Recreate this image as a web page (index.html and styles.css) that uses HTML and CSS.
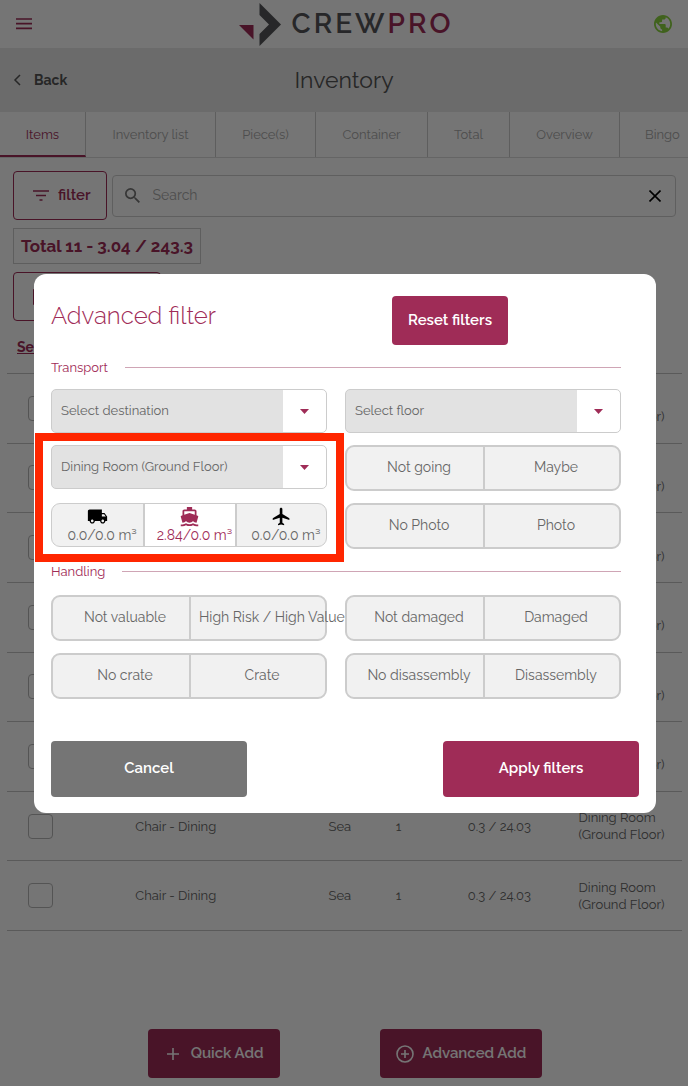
FILE: index.html
```html
<!DOCTYPE html>
<html lang="en">
<head>
<meta charset="utf-8">
<meta name="viewport" content="width=device-width, initial-scale=1">
<title>CrewPro - Inventory</title>
<link rel="stylesheet" href="styles.css">
</head>
<body>
<div class="page">
  <header class="topbar">
    <button class="icon-button" type="button" aria-label="Menu">
      <svg class="menu-icon" viewBox="0 0 16 12"><path d="M0 1h16M0 5.7h16M0 10.4h16" fill="none" stroke="currentColor" stroke-width="1.7"/></svg>
    </button>
    <a class="logo" href="#">
      <svg class="logo-mark" viewBox="0 0 42 43"><path d="M0 22h14.500v14.500z" fill="#9f2c57"/><path d="M20.500 0 42 21.500 20.500 43V31l9.500-9.500-9.500-9.500z" fill="#55565a"/></svg>
      <span class="logo-text">CREW<span class="logo-accent">PRO</span></span>
    </a>
    <button class="icon-button globe" type="button" aria-label="Language">
      <svg class="globe-icon" viewBox="2 2 20 20"><path fill="currentColor" d="M12 2C6.480 2 2 6.480 2 12s4.480 10 10 10 10-4.480 10-10S17.520 2 12 2zm-1 17.930c-3.950-.490-7-3.850-7-7.930 0-.620.080-1.210.210-1.790L9 15v1c0 1.100.900 2 2 2v1.930zm6.900-2.540c-.260-.810-1-1.390-1.900-1.390h-1v-3c0-.550-.450-1-1-1H8v-2h2c.550 0 1-.450 1-1V7h2c1.100 0 2-.900 2-2v-.410c2.930 1.190 5 4.060 5 7.410 0 2.080-.800 3.970-2.100 5.390z"/></svg>
    </button>
  </header>

  <div class="titlebar">
    <a class="back" href="#"><svg class="back-icon" viewBox="0 0 8 12"><path d="M7 1 2 6l5 5" fill="none" stroke="currentColor" stroke-width="1.500"/></svg>Back</a>
    <h1 class="page-title">Inventory</h1>
  </div>

  <nav class="tabs">
    <a class="tab active" href="#">Items</a>
    <a class="tab" href="#">Inventory list</a>
    <a class="tab" href="#">Piece(s)</a>
    <a class="tab" href="#">Container</a>
    <a class="tab" href="#">Total</a>
    <a class="tab" href="#">Overview</a>
    <a class="tab last" href="#">Bingo</a>
  </nav>

  <main class="content">
    <div class="toolbar">
      <button class="outline-button" type="button">
        <svg class="filter-icon" viewBox="0 0 16 11"><path d="M0 1h16M3 5.500h10M6.500 10h3" fill="none" stroke="currentColor" stroke-width="1.700"/></svg>filter
      </button>
      <div class="search">
        <svg class="search-icon" viewBox="3 3 17.500 17.500"><path fill="currentColor" d="M15.500 14h-.790l-.280-.270A6.470 6.470 0 0 0 16 9.500 6.500 6.500 0 1 0 9.500 16c1.610 0 3.090-.590 4.230-1.570l.270.280v.790l5 4.990L20.490 19l-4.990-5zm-6 0C7.010 14 5 11.990 5 9.500S7.010 5 9.500 5 14 7.010 14 9.500 11.990 14 9.500 14z"/></svg>
        <input class="search-input" type="text" placeholder="Search" aria-label="Search">
        <button class="clear" type="button" aria-label="Clear search"><svg class="clear-icon" viewBox="0 0 12 12"><path d="m.5.5 11 11m0-11-11 11" fill="none" stroke="currentColor" stroke-width="1.600"/></svg></button>
      </div>
    </div>
    <div class="total">Total 11 - 3.04 / 243.3</div>
    <button class="outline-button bulk" type="button" aria-label="Edit selection">
      <svg class="bulk-icon" viewBox="0 0 16 16"><rect width="16" height="16" rx="1" fill="currentColor"/></svg>
    </button>
    <a class="select-all" href="#">Select all</a>

    <table class="items">
      <colgroup><col class="c-check"><col class="c-name"><col class="c-mode"><col class="c-count"><col class="c-volume"><col class="c-place"></colgroup>
      <tbody>
        <tr><td><input class="check" type="checkbox" aria-label="Select item 1"></td><td></td><td></td><td></td><td></td><td class="place">Dining Room (Ground Floor)</td></tr>
        <tr><td><input class="check" type="checkbox" aria-label="Select item 2"></td><td></td><td></td><td></td><td></td><td class="place">Dining Room (Ground Floor)</td></tr>
        <tr><td><input class="check" type="checkbox" aria-label="Select item 3"></td><td></td><td></td><td></td><td></td><td class="place">Dining Room (Ground Floor)</td></tr>
        <tr><td><input class="check" type="checkbox" aria-label="Select item 4"></td><td></td><td></td><td></td><td></td><td class="place">Dining Room (Ground Floor)</td></tr>
        <tr><td><input class="check" type="checkbox" aria-label="Select item 5"></td><td></td><td></td><td></td><td></td><td class="place">Dining Room (Ground Floor)</td></tr>
        <tr><td><input class="check" type="checkbox" aria-label="Select item 6"></td><td></td><td></td><td></td><td></td><td class="place">Dining Room (Ground Floor)</td></tr>
        <tr><td><input class="check" type="checkbox" aria-label="Select item 7"></td><td>Chair - Dining</td><td class="mode-cell">Sea</td><td>1</td><td class="volume">0.3 / 24.03</td><td class="place">Dining Room (Ground Floor)</td></tr>
        <tr><td><input class="check" type="checkbox" aria-label="Select item 8"></td><td>Chair - Dining</td><td class="mode-cell">Sea</td><td>1</td><td class="volume">0.3 / 24.03</td><td class="place">Dining Room (Ground Floor)</td></tr>
      </tbody>
    </table>
  </main>

  <footer class="actions">
    <button class="solid-button" type="button"><svg class="add-icon" viewBox="0 0 18 18"><path d="M9 3v12M3 9h12" fill="none" stroke="currentColor" stroke-width="1.600"/></svg>Quick Add</button>
    <button class="solid-button" type="button"><svg class="add-icon" viewBox="0 0 18 18"><circle cx="9" cy="9" r="8" fill="none" stroke="currentColor" stroke-width="1.600"/><path d="M9 5v8M5 9h8" fill="none" stroke="currentColor" stroke-width="1.600"/></svg>Advanced Add</button>
  </footer>
</div>

<div class="backdrop">
  <form class="modal" role="dialog" aria-modal="true" aria-labelledby="modal-title">
    <div class="modal-head">
      <h2 class="modal-title" id="modal-title">Advanced filter</h2>
      <button class="solid-button" type="reset">Reset filters</button>
    </div>

    <h3 class="legend">Transport</h3>
    <div class="columns">
      <div class="stack">
        <div class="select-box">
          <select class="select" aria-label="Destination"><option>Select destination</option></select>
          <svg class="caret" viewBox="0 0 9 5"><path d="M0 0h9L4.500 5z" fill="currentColor"/></svg>
        </div>
        <div class="stack marked">
          <div class="select-box">
            <select class="select" aria-label="Room"><option>Dining Room (Ground Floor)</option></select>
            <svg class="caret" viewBox="0 0 9 5"><path d="M0 0h9L4.500 5z" fill="currentColor"/></svg>
          </div>
          <div class="segments modes">
            <button class="segment mode" type="button" aria-pressed="false">
              <svg class="mode-icon" viewBox="0 0 24 24"><path fill="currentColor" d="M20 8h-3V4H3c-1.100 0-2 .900-2 2v11h2c0 1.660 1.340 3 3 3s3-1.340 3-3h6c0 1.660 1.340 3 3 3s3-1.340 3-3h2v-5l-3-4zM6 18.500c-.830 0-1.500-.670-1.500-1.500s.670-1.500 1.500-1.500 1.500.670 1.500 1.500-.670 1.500-1.500 1.500zm13.500-9 1.960 2.500H17V9.500h2.500zm-1.500 9c-.830 0-1.500-.670-1.500-1.500s.670-1.500 1.500-1.500 1.500.670 1.500 1.500-.670 1.500-1.500 1.500z"/></svg>
              <span class="mode-text">0.0/0.0 m³</span>
            </button>
            <button class="segment mode selected" type="button" aria-pressed="true">
              <svg class="mode-icon" viewBox="0 0 24 24"><path fill="currentColor" d="M20 21c-1.390 0-2.780-.470-4-1.320-2.440 1.710-5.560 1.710-8 0C6.780 20.530 5.390 21 4 21H2v2h2c1.380 0 2.740-.350 4-.990 2.520 1.290 5.480 1.290 8 0 1.260.650 2.620.990 4 .990h2v-2h-2zM3.950 19H4c1.600 0 3.020-.880 4-2 .980 1.120 2.400 2 4 2s3.020-.880 4-2c.980 1.120 2.400 2 4 2h.050l1.890-6.680c.080-.260.060-.540-.060-.780s-.340-.420-.600-.500L20 10.620V6c0-1.100-.900-2-2-2h-3V1H9v3H6c-1.100 0-2 .900-2 2v4.620l-1.290.420c-.260.080-.480.260-.600.500s-.150.520-.060.780L3.950 19zM6 6h12v3.970L12 8 6 9.970V6z"/></svg>
              <span class="mode-text">2.84/0.0 m³</span>
            </button>
            <button class="segment mode" type="button" aria-pressed="false">
              <svg class="mode-icon" viewBox="0 0 24 24"><path fill="currentColor" d="M21 16v-2l-8-5V3.500c0-.830-.670-1.500-1.500-1.500S10 2.670 10 3.500V9l-8 5v2l8-2.500V19l-2 1.500V22l3.500-1 3.500 1v-1.500L13 19v-5.500l8 2.500z"/></svg>
              <span class="mode-text">0.0/0.0 m³</span>
            </button>
          </div>
        </div>
      </div>
      <div class="stack">
        <div class="select-box">
          <select class="select" aria-label="Floor"><option>Select floor</option></select>
          <svg class="caret" viewBox="0 0 9 5"><path d="M0 0h9L4.500 5z" fill="currentColor"/></svg>
        </div>
        <div class="segments"><button class="segment" type="button">Not going</button><button class="segment" type="button">Maybe</button></div>
        <div class="segments"><button class="segment" type="button">No Photo</button><button class="segment" type="button">Photo</button></div>
      </div>
    </div>

    <h3 class="legend">Handling</h3>
    <div class="columns">
      <div class="stack">
        <div class="segments"><button class="segment" type="button">Not valuable</button><button class="segment" type="button">High Risk / High Value</button></div>
        <div class="segments"><button class="segment" type="button">No crate</button><button class="segment" type="button">Crate</button></div>
      </div>
      <div class="stack">
        <div class="segments"><button class="segment" type="button">Not damaged</button><button class="segment" type="button">Damaged</button></div>
        <div class="segments"><button class="segment" type="button">No disassembly</button><button class="segment" type="button">Disassembly</button></div>
      </div>
    </div>

    <div class="modal-foot">
      <button class="solid-button large muted" type="button">Cancel</button>
      <button class="solid-button large" type="submit">Apply filters</button>
    </div>
  </form>
</div>
</body>
</html>
```

FILE: styles.css
```css
* { box-sizing: border-box; }
body {
  margin: 0;
  background: #fff;
  color: #666;
  font: 14px/17px Raleway, Lato, "Open Sans", sans-serif;
}
button, input, select { font: inherit; color: inherit; }
button { cursor: pointer; }
a { color: inherit; text-decoration: none; }
svg { display: block; flex: none; }

.page { display: flex; flex-direction: column; min-height: 100vh; }

.topbar {
  display: grid;
  grid-template-columns: 1fr auto 1fr;
  align-items: center;
  height: 48px;
  padding: 0 16px;
}
.icon-button { justify-self: start; border: 0; padding: 0; background: none; color: #9f2c57; }
.globe { justify-self: end; color: #8cd640; }
.menu-icon { width: 16px; height: 12px; }
.globe-icon { width: 18px; height: 18px; }
.logo { display: flex; align-items: center; gap: 11px; padding-left: 4px; color: #55565a; }
.logo-mark { width: 42px; height: 43px; }
.logo-text { font-size: 28px; line-height: 32px; font-weight: 600; letter-spacing: 3px; }
.logo-accent { color: #9f2c57; }

.titlebar {
  display: grid;
  grid-template-columns: 1fr auto 1fr;
  align-items: center;
  height: 64px;
  padding: 0 13px;
  background: #e9e9e9;
  color: #555;
}
.back { display: flex; align-items: center; gap: 13px; font-weight: 700; }
.back-icon { width: 8px; height: 12px; }
.page-title { margin: 0; font-size: 23px; line-height: 28px; font-weight: 400; }

.tabs {
  display: grid;
  grid-template-columns: 86px 130px 100px 112px 82px 110px 1fr;
  height: 46px;
  border-bottom: 1px solid #dcdcdc;
  color: #aaa;
  font-size: 13px;
}
.tab { display: flex; align-items: center; justify-content: center; border-right: 1px solid #ccc; white-space: nowrap; }
.tab.active { color: #9f2c57; border-bottom: 2px solid #9f2c57; padding-top: 2px; }
.tab.last { justify-content: flex-start; padding-left: 25px; border-right: 0; }

.content { display: flex; flex-direction: column; align-items: flex-start; padding: 13px 12px 0 13px; }
.toolbar { display: flex; align-items: center; gap: 5px; align-self: stretch; }
.outline-button {
  display: flex;
  align-items: center;
  gap: 9px;
  height: 49px;
  padding: 0 15px 0 19px;
  border: 1px solid #9f2c57;
  border-radius: 4px;
  background: none;
  color: #9f2c57;
  font-size: 15px;
  font-weight: 600;
}
.filter-icon { width: 16px; height: 11px; }
.search {
  display: flex;
  flex: 1;
  align-items: center;
  gap: 13px;
  height: 42px;
  padding: 0 14px 0 12px;
  border: 1px solid #d0d0d0;
  border-radius: 4px;
}
.search-icon { width: 15px; height: 15px; color: #777; }
.search-input { flex: 1; min-width: 0; border: 0; padding: 0; background: none; outline: 0; }
.search-input::placeholder { color: #aaa; opacity: 1; }
.clear { border: 0; padding: 0; background: none; color: #000; }
.clear-icon { width: 12px; height: 12px; }
.total {
  margin-top: 8px;
  padding: 8px 7px;
  border: 1px solid #ccc;
  color: #9f2c57;
  font-size: 17px;
  line-height: 18px;
  font-weight: 700;
}
.bulk { margin-top: 8px; width: 148px; }
.bulk-icon { width: 16px; height: 16px; }
.select-all { margin: 18px 0 0 4px; color: #9f2c57; font-weight: 700; text-decoration: underline; }

.items {
  align-self: stretch;
  height: 558px;
  margin: 17px -6px 0;
  border-collapse: collapse;
  table-layout: fixed;
  border-top: 1px solid #c4c4c4;
  font-size: 13px;
}
.items td { padding: 0; border-bottom: 1px solid #c4c4c4; text-align: center; }
.items .mode-cell { padding-left: 38px; }
.items .volume { padding-left: 6px; }
.items .place { text-align: left; padding: 0 16px 0 18px; }
.c-check { width: 10%; }
.c-name { width: 30%; }
.c-mode { width: 13%; }
.c-count { width: 10%; }
.c-volume { width: 19%; }
.c-place { width: 18%; }
.check {
  display: block;
  width: 25px;
  height: 25px;
  margin: 0 auto;
  appearance: none;
  border: 1px solid #b8b8b8;
  border-radius: 4px;
}

.actions { display: flex; justify-content: center; gap: 100px; margin-top: auto; padding: 16px 0 8px 2px; }
.solid-button {
  display: flex;
  align-items: center;
  justify-content: center;
  gap: 9px;
  height: 49px;
  padding: 0 16px;
  border: 0;
  border-radius: 4px;
  background: #9f2c57;
  color: #fff;
  font-size: 15px;
  font-weight: 600;
}
.add-icon { width: 18px; height: 18px; }

.backdrop {
  position: fixed;
  inset: 0;
  display: flex;
  align-items: center;
  justify-content: center;
  padding: 0 32px 0 34px;
  background: rgba(0, 0, 0, .54);
}
.modal { width: 100%; padding: 22px 17px 16px; border-radius: 12px; background: #fff; }
.modal-head { display: grid; grid-template-columns: 58% auto; justify-content: start; align-items: center; padding-bottom: 1px; }
.modal-title { margin: 0 0 8px; color: #9f2c57; font-size: 24px; line-height: 28px; font-weight: 300; }
.legend {
  display: flex;
  align-items: center;
  gap: 17px;
  height: 43px;
  margin: 0 18px 0 0;
  color: #9f2c57;
  font-size: 13px;
  font-weight: 400;
}
.legend::after { content: ""; flex: 1; height: 1px; background: #cfa5b5; }
.columns { display: grid; grid-template-columns: 1fr 1fr; gap: 18px; margin-right: 18px; }
.columns + .legend { height: 46px; }
.stack { display: flex; flex-direction: column; gap: 12px; }
.marked { position: relative; gap: 14px; }
.marked::after {
  content: "";
  position: absolute;
  inset: -12px -17px -15px -16px;
  border: 8px solid #ff2600;
  pointer-events: none;
}
.select-box { position: relative; }
.select {
  display: block;
  width: 100%;
  height: 44px;
  padding: 0 52px 0 9px;
  appearance: none;
  border: 1px solid #ccc;
  border-radius: 5px;
  background: linear-gradient(to left, #fff 43px, #e2e2e2 43px);
  font-size: 13px;
}
.caret { position: absolute; top: 20px; right: 18px; width: 9px; height: 5px; color: #9f2c57; }
.segments {
  display: grid;
  grid-auto-flow: column;
  grid-auto-columns: minmax(0, 1fr);
  height: 46px;
  border: 2px solid #ccc;
  border-radius: 9px;
  background: #f1f1f1;
}
.segment {
  display: flex;
  align-items: center;
  justify-content: safe center;
  min-width: 0;
  padding: 0 0 0 8px;
  border: 0;
  background: none;
  white-space: nowrap;
}
.segment + .segment { border-left: 2px solid #ccc; }
.segments.modes { height: 44px; border-width: 1px; }
.mode { flex-direction: column; justify-content: center; padding: 0; color: #000; }
.mode-icon { width: 21px; height: 21px; }
.mode-text { padding-left: 9px; color: #666; }
.selected { background: #fff; color: #9f2c57; }
.selected .mode-text { color: inherit; }
.modal-foot { display: flex; justify-content: space-between; margin-top: 42px; }
.large { width: 196px; height: 56px; }
.muted { background: #757575; }
```
